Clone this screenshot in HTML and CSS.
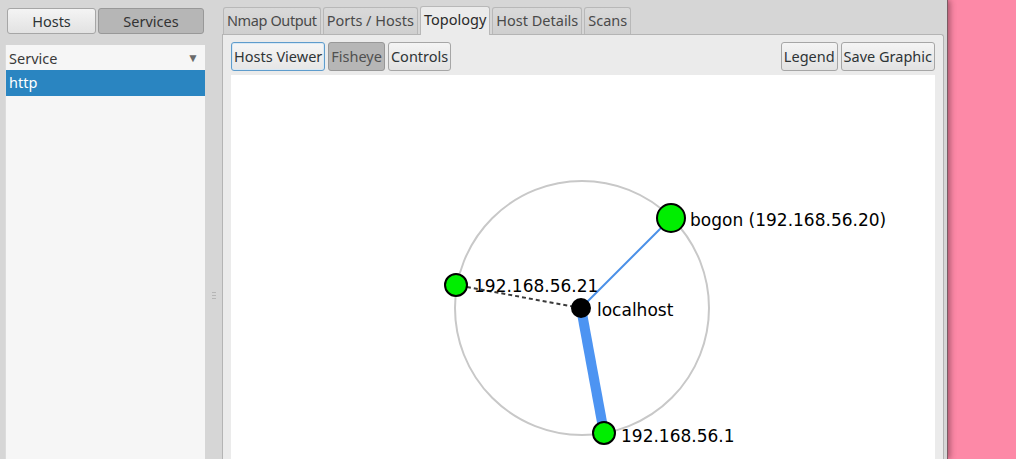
FILE: index.html
```html
<!DOCTYPE html>
<html>
<head>
<meta charset="utf-8">
<link rel="stylesheet" href="styles.css">
</head>
<body>
<div class="window">
  <div class="left-pane">
    <div class="mode-buttons">
      <button class="btn mode-hosts">Hosts</button>
      <button class="btn mode-services pressed">Services</button>
    </div>
    <div class="list">
      <div class="list-header"><span>Service</span><span class="sort">▼</span></div>
      <div class="list-row selected">http</div>
    </div>
  </div>
  <div class="handle"><span class="grip"></span></div>
  <div class="notebook">
    <div class="tabs">
      <div class="tab tight">Nmap Output</div>
      <div class="tab">Ports / Hosts</div>
      <div class="tab active">Topology</div>
      <div class="tab">Host Details</div>
      <div class="tab">Scans</div>
    </div>
    <div class="page">
      <div class="toolbar">
        <div class="group">
          <button class="btn focused">Hosts Viewer</button>
          <button class="btn pressed dim">Fisheye</button>
          <button class="btn">Controls</button>
        </div>
        <div class="group">
          <button class="btn">Legend</button>
          <button class="btn">Save Graphic</button>
        </div>
      </div>
      <div class="canvas">
        <svg class="graph" width="704" height="384" viewBox="0 0 704 384">
          <circle cx="351" cy="233" r="127" fill="none" stroke="#c8c8c8" stroke-width="2"/>
          <line x1="350" y1="233" x2="440" y2="143" stroke="#4a90e8" stroke-width="2"/>
          <line x1="350" y1="233" x2="225" y2="210" stroke="#3a3a3a" stroke-width="2" stroke-dasharray="4 3"/>
          <line x1="350" y1="233" x2="373" y2="358" stroke="#4d94f2" stroke-width="10"/>
          <circle cx="350" cy="233" r="10" fill="#000"/>
          <circle cx="440" cy="143" r="14" fill="#00ee00" stroke="#000" stroke-width="2"/>
          <circle cx="225" cy="210" r="11" fill="#00ee00" stroke="#000" stroke-width="2"/>
          <circle cx="373" cy="358" r="11" fill="#00ee00" stroke="#000" stroke-width="2"/>
          <text class="label" x="459" y="151">bogon (192.168.56.20)</text>
          <text class="label" x="243" y="217">192.168.56.21</text>
          <text class="label" x="366" y="241">localhost</text>
          <text class="label" x="390" y="367">192.168.56.1</text>
        </svg>
      </div>
    </div>
  </div>
</div>
</body>
</html>
```

FILE: styles.css
```css
* { box-sizing: border-box; }
html, body { margin: 0; padding: 0; height: 100%; overflow: hidden; }
body {
  background: #fd89a7;
  font-family: "Noto Sans", "Open Sans", sans-serif;
  font-size: 14.5px;
  color: #2e3436;
}
.window {
  width: 947px;
  height: 459px;
  background: #d6d6d6;
  display: flex;
  box-shadow: 1px 0 0 #7a5a62, 3px 0 6px rgba(60, 20, 30, 0.45);
  position: relative;
}
.left-pane {
  width: 205px;
  flex: none;
  display: flex;
  flex-direction: column;
  padding-left: 5px;
}
.mode-buttons {
  display: flex;
  gap: 2px;
  padding: 8px 0 0 2px;
  height: 45px;
}
.btn {
  font: inherit;
  color: #2e3436;
  background: linear-gradient(#f4f4f4, #e2e2e2);
  border: 1px solid #a6a6a6;
  border-radius: 3px;
  padding: 0 4px;
  height: 26px;
  line-height: 24px;
  margin: 0;
}
.btn.pressed {
  background: #b6b6b6;
  border-color: #989898;
  color: #333;
}
.btn.dim { color: #505050; }
.btn.focused {
  border-color: #5e9ccc;
  box-shadow: inset 0 0 0 1px #d8e8f4;
  background: linear-gradient(#f6f6f6, #e6e6e6);
}
.mode-hosts { width: 89px; }
.mode-services { width: 106px; }
.list {
  flex: 1;
  background: #f6f6f6;
  border-left: 1px solid #dcdcdc;
}
.list-header {
  height: 25px;
  display: flex;
  justify-content: space-between;
  align-items: center;
  padding: 0 6px 0 3px;
  color: #3a3a3a;
}
.sort { font-size: 12px; color: #6a6a6a; }
.list-row {
  height: 26px;
  line-height: 25px;
  padding-left: 3px;
}
.list-row.selected {
  background: #2a85c1;
  color: #fff;
}
.handle {
  width: 17px;
  flex: none;
  display: flex;
  align-items: center;
  justify-content: center;
  padding-top: 132px;
}
.grip {
  width: 4px;
  height: 8px;
  background: repeating-linear-gradient(#a8a8a8 0 1px, transparent 1px 3px);
  opacity: 0.7;
}
.notebook {
  width: 722px;
  flex: none;
  display: flex;
  flex-direction: column;
}
.tabs {
  display: flex;
  gap: 2px;
  padding: 7px 0 0 1px;
  height: 34px;
  align-items: flex-end;
}
.tab {
  height: 27px;
  line-height: 25px;
  padding: 0 3px;
  background: linear-gradient(#d9d9d9, #cfcfcf);
  border: 1px solid #b8b8b8;
  border-bottom: none;
  border-radius: 3px 3px 0 0;
  color: #4a4a4a;
}
.tab.tight { letter-spacing: -0.4px; }
.tab.active {
  height: 29px;
  background: #ebebeb;
  color: #2a2a2a;
  margin-bottom: -1px;
  position: relative;
  z-index: 1;
}
.page {
  flex: 1;
  background: #ebebeb;
  border: 1px solid #b4b4b4;
  border-bottom: none;
  border-radius: 0 3px 0 0;
  padding: 7px 8px 0 8px;
  display: flex;
  flex-direction: column;
}
.toolbar {
  display: flex;
  justify-content: space-between;
  height: 33px;
}
.group { display: flex; gap: 3px; height: 29px; }
.group .btn { height: 29px; line-height: 27px; padding: 0 2px; }
.canvas {
  flex: 1;
  background: #fff;
}
.graph { display: block; }
.label {
  font-family: "DejaVu Sans", sans-serif;
  font-size: 17px;
  fill: #000;
}
```
